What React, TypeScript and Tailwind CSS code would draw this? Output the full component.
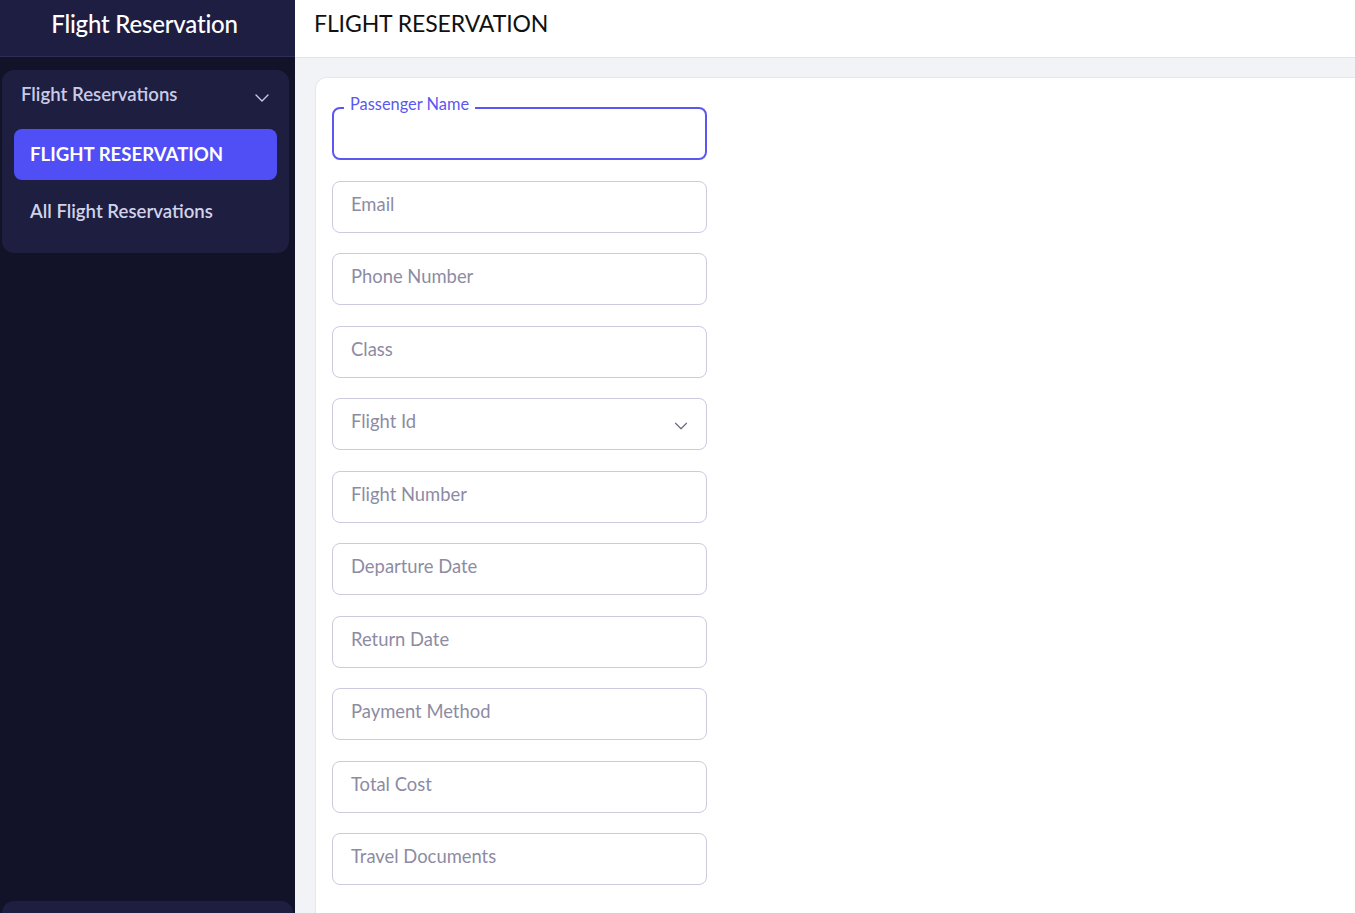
import React from "react";
import { ChevronDown } from "lucide-react";

const fields = [
  "Email",
  "Phone Number",
  "Class",
  "Flight Id",
  "Flight Number",
  "Departure Date",
  "Return Date",
  "Payment Method",
  "Total Cost",
  "Travel Documents",
];

const Sidebar = () => {
  return (
    <aside className="w-[295px] shrink-0 h-full bg-[#121229] flex flex-col">
      <div className="h-[57px] shrink-0 bg-[#1e1e42] border-b border-[#2e2e55] flex items-center justify-center pr-[6px] pb-[9px]">
        <h1 className="text-[24px] text-white font-medium tracking-[-0.2px]">Flight Reservation</h1>
      </div>
      <div className="flex-1 flex flex-col justify-between pt-[13px] pl-[2px] pr-[6px]">
        <div className="bg-[#1e1e40] rounded-xl pt-[12px] pb-[9px]">
          <div className="flex items-center justify-between pl-[19px] pr-[15px] h-[26px]">
            <span className="text-[18.6px] font-semibold text-[#c9cbe6]">Flight Reservations</span>
            <ChevronDown className="w-[24px] h-[24px] text-[#c9cbe6] mt-[5px]" strokeWidth={1.4} />
          </div>
          <div className="mt-[21px] mx-[12px] h-[51px] rounded-lg bg-[#4f4ff5] flex items-center pl-[16px]">
            <span className="text-[18.6px] font-bold text-white">FLIGHT RESERVATION</span>
          </div>
          <div className="h-[64px] flex items-center pl-[28px]">
            <span className="text-[18.6px] font-semibold text-[#d0d2ea]">All Flight Reservations</span>
          </div>
        </div>
        <div className="h-[12px] bg-[#1e1e40] rounded-t-xl -mr-[4px]" />
      </div>
    </aside>
  );
};

const Field = ({ label }: { label: string }) => {
  return (
    <div className="w-[375px] h-[52px] rounded-lg border border-[#cdc9de] flex items-center justify-between pl-[18px] pr-[14px] pb-[4px]">
      <span className="text-[18.4px] text-[#8d8ba3]">{label}</span>
      {label === "Flight Id" && <ChevronDown className="w-[22px] h-[22px] text-[#6b6b80] mt-[8px]" strokeWidth={1.3} />}
    </div>
  );
};

export default function App() {
  return (
    <div className="w-[1355px] h-[913px] overflow-hidden flex font-['Lato','Noto_Sans',sans-serif]">
      <Sidebar />
      <main className="flex-1 flex flex-col bg-[#f2f3f7] min-w-0">
        <header className="h-[58px] shrink-0 bg-white border-b border-[#e3e4ea] flex items-center pl-[19px] pb-[11px]">
          <h2 className="text-[23px] text-[#111] tracking-[-0.1px]">FLIGHT RESERVATION</h2>
        </header>
        <div className="flex-1 pl-[20px] pt-[19px]">
          <div className="h-full bg-white rounded-tl-xl border-l border-t border-[#e6e7ec] pl-[16px] pt-[29px] flex flex-col gap-[20.5px]">
            <div className="relative w-[375px] h-[53px] rounded-lg border-2 border-[#5a58f0]">
              <span className="absolute -top-[17px] left-[10px] bg-white px-[6px] text-[16.4px] text-[#5a58f0]">Passenger Name</span>
            </div>
            {fields.map((f) => (
              <Field key={f} label={f} />
            ))}
          </div>
        </div>
      </main>
    </div>
  );
}
